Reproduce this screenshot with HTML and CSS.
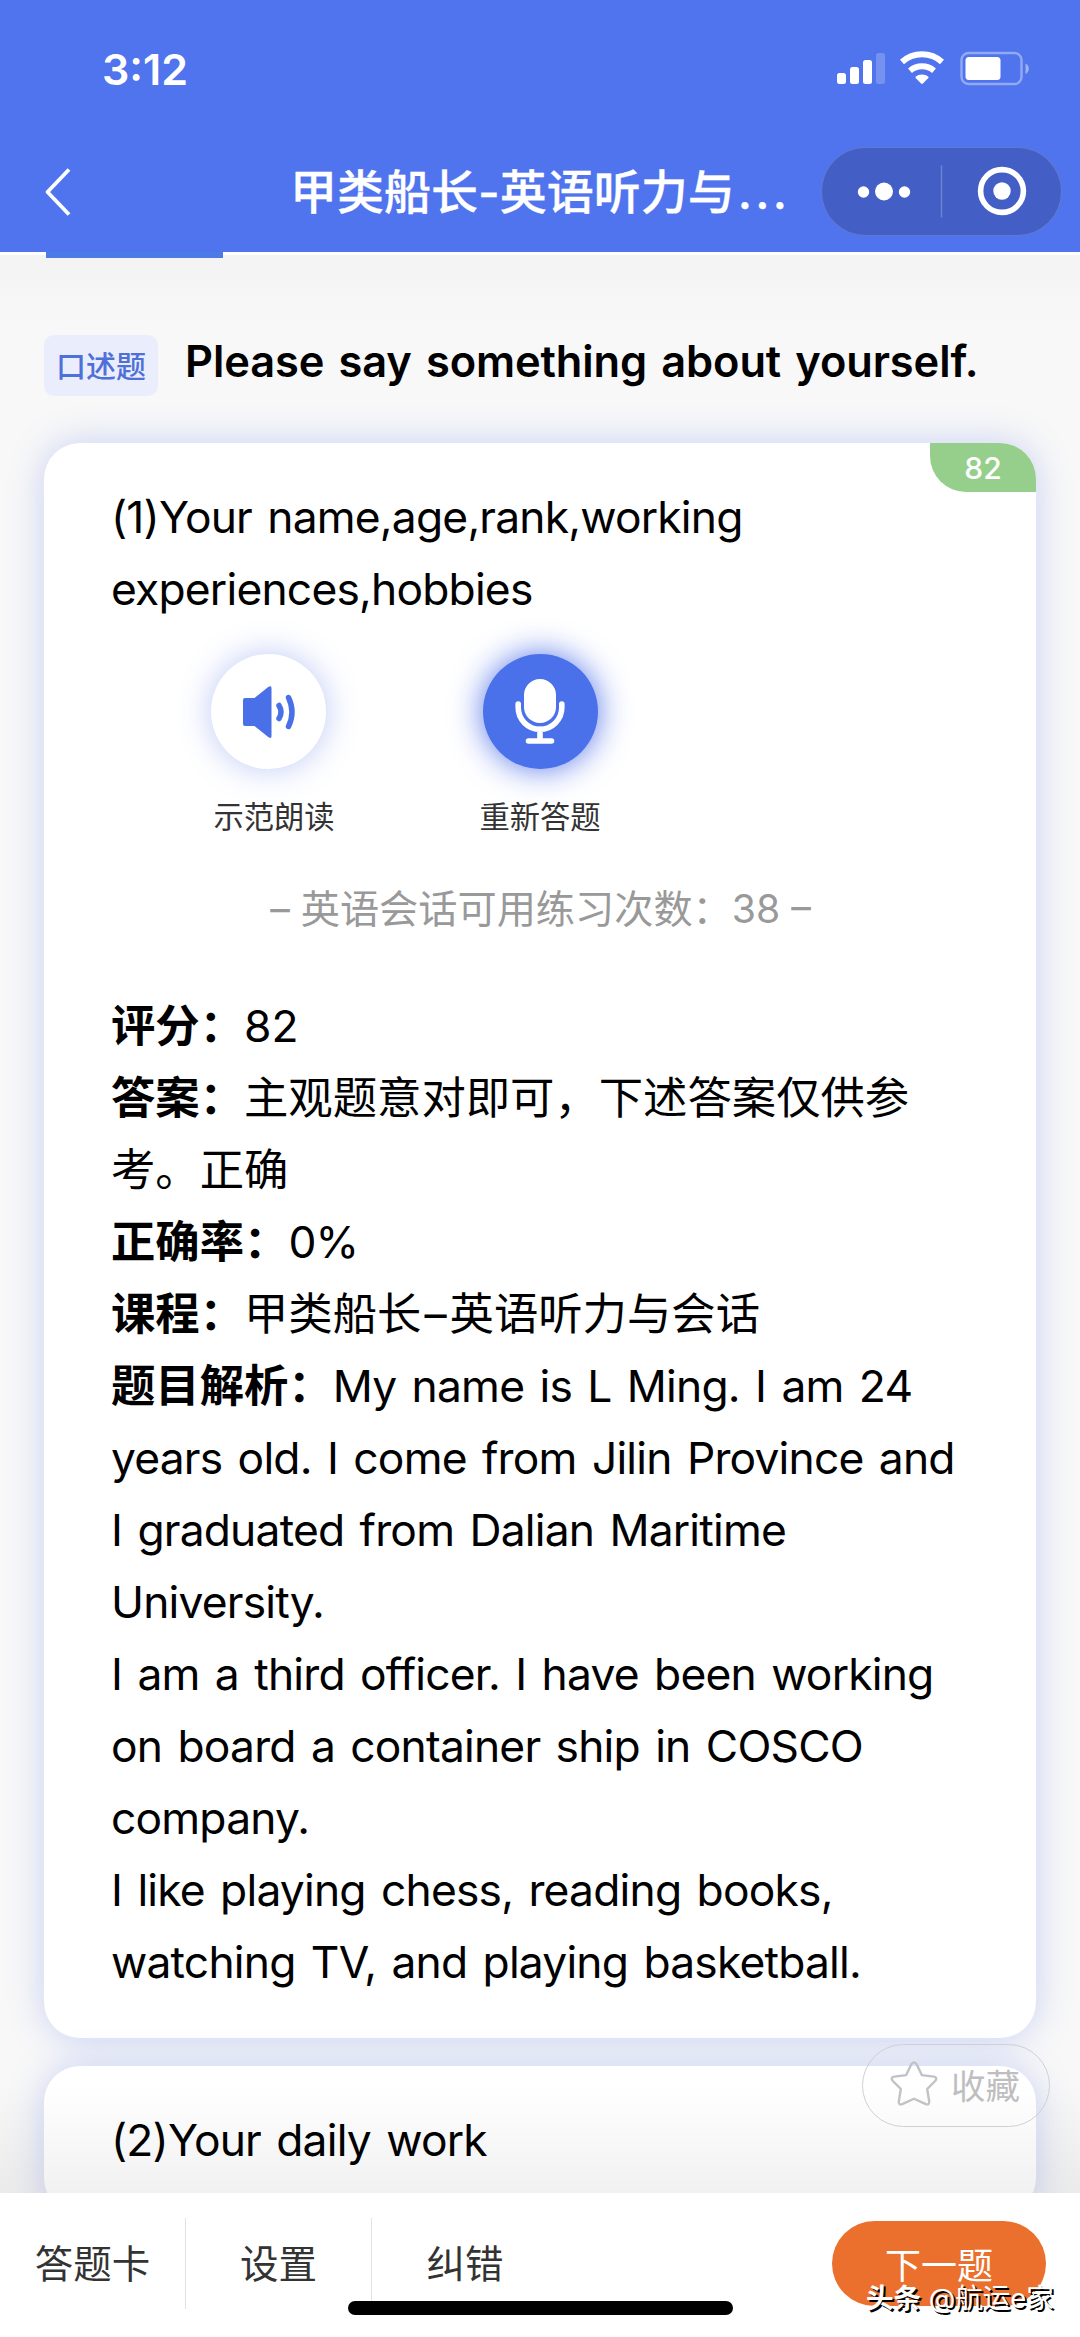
FILE: index.html
```html
<!DOCTYPE html>
<html lang="zh-CN">
  <head>
    <meta charset="UTF-8" />
    <meta name="viewport" content="width=device-width, initial-scale=1.0" />
    <title>甲类船长-英语听力与会话</title>
    <link rel="stylesheet" href="styles.css">
  </head>
  <body>
    <div class="screen">
      <header class="header">
        <div class="status-bar">
          <span class="time">3:12</span>
          <svg class="status-icons" width="194" height="38" viewBox="0 0 194 38">
            <g fill="#fff">
              <rect x="2" y="23" width="9" height="11" rx="2.5" />
              <rect x="15" y="17" width="9" height="17" rx="2.5" />
              <rect x="28" y="10" width="9" height="24" rx="2.5" />
              <rect x="41" y="3" width="9" height="31" rx="2.5" opacity="0.22" />
              <path d="M87 24.500c2.400 0 4.600.800 6.300 2.200q.700.600 0 1.300l-5.400 5.600q-.900.800-1.800 0L80.700 28q-.700-.700 0-1.300c1.700-1.400 3.900-2.200 6.300-2.200z" />
            </g>
            <g fill="none" stroke="#fff" stroke-width="6">
              <path d="M75 20.700a18.700 18.700 0 0 1 24 0" />
              <path d="M67 12a30 30 0 0 1 40 0" />
            </g>
            <rect x="126.500" y="3" width="60" height="31" rx="7" fill="none" stroke="#fff" stroke-opacity="0.38" stroke-width="2.400" />
            <rect x="130.500" y="7" width="35" height="23" rx="3.500" fill="#fff" />
            <path d="M190.500 13.500c4.500 2 4.500 8.500 0 10.500z" fill="#fff" opacity="0.45" />
          </svg>
        </div>
        <div class="nav-bar">
          <svg class="back" width="30" height="54" viewBox="0 0 30 54">
            <path d="M26 4.500 4.500 27 26 49.500" fill="none" stroke="#fff" stroke-width="3.800" stroke-linejoin="round" />
          </svg>
          <h1 class="page-title">甲类船长-英语听力与<span class="dots">...</span></h1>
          <div class="capsule">
            <svg width="239" height="87" viewBox="0 0 239 87">
              <g fill="#fff">
                <circle cx="41.500" cy="44" r="5.700" />
                <circle cx="62" cy="43.500" r="9" />
                <circle cx="82.500" cy="44" r="5.700" />
                <circle cx="180" cy="43" r="8.700" />
              </g>
              <path d="M119.500 17.500v52" stroke="#fff" stroke-opacity="0.22" stroke-width="1.500" />
              <circle cx="180" cy="43" r="21.400" fill="none" stroke="#fff" stroke-width="5.600" />
            </svg>
          </div>
        </div>
      </header>
      <div class="tab-line"></div>

      <main class="content">
        <div class="question">
          <span class="tag">口述题</span>
          <h2 class="question-title">Please say something about yourself.</h2>
        </div>

        <section class="card">
          <span class="score">82</span>
          <p class="text en">(1)Your name,age,rank,working<br>experiences,hobbies</p>
          <div class="actions">
            <div class="action">
              <span class="circle circle-listen">
                <svg width="52" height="52" viewBox="0 0 52 52">
                  <path d="M2 12h9.500L25.500 .800q3-1.800 3 1.200v48q0 3-3 1.200L11.500 40H2q-2 0-2-2V14q0-2 2-2z" fill="#4a70e8" />
                  <path d="M36 19.500q4 6.500 0 13" fill="none" stroke="#4a70e8" stroke-width="5.500" stroke-linecap="round" />
                  <path d="M45.500 11.500q7 14.500 0 29" fill="none" stroke="#4a70e8" stroke-width="5.500" stroke-linecap="round" />
                </svg>
              </span>
              <span class="action-name">示范朗读</span>
            </div>
            <div class="action">
              <span class="circle circle-record">
                <svg width="50" height="66" viewBox="0 0 50 66">
                  <rect x="9" y="0" width="32" height="44" rx="16" fill="#fff" />
                  <path d="M3.200 25v3.500a21.800 21.800 0 0 0 43.600 0V25M25 50v11M13.500 62h23" fill="none" stroke="#fff" stroke-width="5.600" stroke-linecap="round" />
                </svg>
              </span>
              <span class="action-name">重新答题</span>
            </div>
          </div>
          <p class="times">– 英语会话可用练习次数：38 –</p>
          <div class="text detail">
            <p><b>评分：</b>82</p>
            <p><b>答案：</b>主观题意对即可，下述答案仅供参<br>考。正确</p>
            <p><b>正确率：</b><span class="en">0%</span></p>
            <p><b>课程：</b>甲类船长<span class="dash">–</span>英语听力与会话</p>
            <p class="en">
              <b>题目解析：</b>My name is L Ming. I am 24<br>
              years old. I come from Jilin Province and<br>
              I graduated from Dalian Maritime<br>
              University.<br>
              I am a third officer. I have been working<br>
              on board a container ship in COSCO<br>
              company.<br>
              I like playing chess, reading books,<br>
              watching TV, and playing basketball.
            </p>
          </div>
        </section>

        <section class="card">
          <p class="text en">(2)Your daily work</p>
        </section>
        <div class="fade"></div>
      </main>

      <div class="favorite">
        <svg width="48" height="46" viewBox="0 0 48 48" preserveAspectRatio="none">
          <path d="M21.500 3.200q2.500-3.400 5 0l5.300 11.500 12 1.700q4 .900 1.600 4.200l-8.200 8.600 2 13q.300 4-3.400 2.800L24 39.300 12.200 45q-3.700 1.200-3.400-2.800l2-13-8.200-8.600q-2.400-3.300 1.600-4.200l12-1.700z" fill="none" stroke="#c2c2c4" stroke-width="2.400" stroke-linejoin="round" />
        </svg>
        <span>收藏</span>
      </div>

      <footer class="footer">
        <a class="footer-item">答题卡</a>
        <a class="footer-item">设置</a>
        <a class="footer-item">纠错</a>
        <button class="next">下一题</button>
      </footer>
      <div class="home-indicator"></div>
      <div class="watermark"><b>头条</b> @航运e家</div>
    </div>
  </body>
</html>
```
FILE: styles.css
```css
html,
body {
  margin: 0;
  padding: 0;
  background: #fff;
}

body {
  font-family: "Inter", "Noto Sans CJK SC", sans-serif;
  color: #000;
}

h1,
h2,
p {
  margin: 0;
}

.screen {
  position: relative;
  display: flex;
  flex-direction: column;
  overflow: hidden;
  width: 1080px;
  height: 2337px;
}

/* Header */
.header {
  flex: none;
  height: 252px;
  background: #4f74ee;
  color: #fff;
}

.status-bar {
  display: flex;
  align-items: center;
  justify-content: space-between;
  height: 138px;
  padding: 0 51px 0 102px;
  box-sizing: border-box;
}

.time {
  font-size: 43px;
  font-weight: 600;
}

.nav-bar {
  display: flex;
  align-items: center;
  height: 107px;
  padding: 0 18px 0 43px;
}

.page-title {
  flex: 1;
  padding-left: 217px;
  font-size: 47px;
  font-weight: 500;
  line-height: 60px;
  white-space: nowrap;
  -webkit-text-stroke: 0.3px #fff;
}

.page-title .dots {
  margin-left: 3px;
  letter-spacing: 3.2px;
}

.capsule {
  flex: none;
  width: 239px;
  height: 87px;
  border: 1px solid rgba(255, 255, 255, 0.16);
  border-radius: 45px;
  background: #435fc6;
}

.capsule svg {
  display: block;
}

.tab-line {
  position: relative;
  z-index: 1;
  flex: none;
  width: 177px;
  height: 6px;
  margin: 0 0 -6px 46px;
  background: #4c7ae6;
}

/* Content */
.content {
  position: relative;
  flex: 1;
  min-height: 0;
  overflow: hidden;
  padding: 0 44px;
  border-top: 3px solid #fff;
  background: linear-gradient(#f3f3f4, #f8f8f8 70px);
}

.question {
  display: flex;
  align-items: flex-start;
  height: 108px;
  padding-top: 80px;
}

.tag {
  width: 114px;
  height: 61px;
  border-radius: 10px;
  background: #eaedfb;
  color: #4f70d8;
  font-size: 30px;
  font-weight: 500;
  line-height: 62px;
  text-align: center;
}

.question-title {
  margin-left: 27px;
  font-size: 43.4px;
  font-weight: 600;
  line-height: 52px;
  letter-spacing: -0.1px;
  word-spacing: 3.4px;
  white-space: nowrap;
}

/* Card */
.card {
  position: relative;
  height: 1595px;
  padding: 38px 66px 0 67px;
  margin-bottom: 28px;
  box-sizing: border-box;
  border-radius: 36px;
  background: #fff;
  box-shadow: 0 0 36px rgba(79, 112, 232, 0.28);
}

.card + .card {
  height: 148px;
}

.score {
  position: absolute;
  top: 0;
  right: 0;
  width: 106px;
  height: 49px;
  border-radius: 0 36px 0 36px;
  background: #96cf8b;
  color: #fff;
  font-size: 30px;
  font-weight: 500;
  line-height: 50px;
  text-align: center;
}

.text {
  font-size: 44.35px;
  line-height: 72px;
  white-space: nowrap;
}

.en {
  letter-spacing: -0.8px;
  word-spacing: 3.6px;
}

.en b {
  letter-spacing: 0;
}

.dash {
  padding: 0 3px;
}

.actions {
  display: flex;
  padding: 29px 0 0 97px;
}

.action {
  display: flex;
  flex-direction: column;
  align-items: center;
  width: 132px;
  margin-right: 134px;
}

.circle {
  display: flex;
  align-items: center;
  justify-content: center;
  width: 115px;
  height: 115px;
  border-radius: 50%;
}

.circle-listen {
  margin-left: -11px;
  background: #fff;
  box-shadow: 0 0 32px rgba(79, 112, 232, 0.38);
}

.circle-record {
  background: #4a71ea;
  box-shadow: 0 0 32px rgba(79, 112, 232, 0.95);
}

.action-name {
  margin-top: 26px;
  font-size: 30.3px;
  line-height: 44px;
  color: #333;
}

.times {
  margin-top: 40px;
  font-size: 39.2px;
  line-height: 60px;
  color: #999;
  text-align: center;
}

.detail {
  margin-top: 51px;
}

.fade {
  position: absolute;
  left: 0;
  right: 0;
  bottom: 0;
  height: 110px;
  background: linear-gradient(rgba(0, 0, 0, 0), rgba(0, 0, 0, 0.055));
}

.favorite {
  position: absolute;
  left: 862px;
  top: 2044px;
  display: flex;
  align-items: center;
  gap: 13px;
  width: 188px;
  height: 83px;
  padding: 0 0 3px 27px;
  box-sizing: border-box;
  border: 1.5px solid #d0d0d4;
  border-radius: 42px;
  font-size: 34.5px;
  color: #bebec0;
}

/* Footer */
.footer {
  display: flex;
  flex: none;
  align-items: flex-start;
  height: 144px;
  background: #fff;
}

.footer-item {
  width: 186px;
  height: 91px;
  margin-top: 25px;
  box-sizing: border-box;
  border-right: 1px solid #e2e2e2;
  font-size: 38.5px;
  line-height: 92px;
  color: #333;
  text-align: center;
}

.footer-item:nth-child(3) {
  border-right: none;
}

.next {
  width: 214px;
  height: 85px;
  padding: 0 0 2px;
  margin: 28px 34px 0 auto;
  border: none;
  border-radius: 43px;
  background: #ec702d;
  font-family: inherit;
  font-size: 36px;
  color: #fff;
}

.home-indicator {
  position: absolute;
  left: 348px;
  top: 2301px;
  width: 385px;
  height: 14px;
  border-radius: 7px;
  background: #000;
}

.watermark {
  position: absolute;
  left: 866px;
  top: 2278px;
  font-size: 27.5px;
  line-height: 40px;
  color: #fff;
  white-space: nowrap;
  text-shadow: 2px 2px 0 #000;
}
```
